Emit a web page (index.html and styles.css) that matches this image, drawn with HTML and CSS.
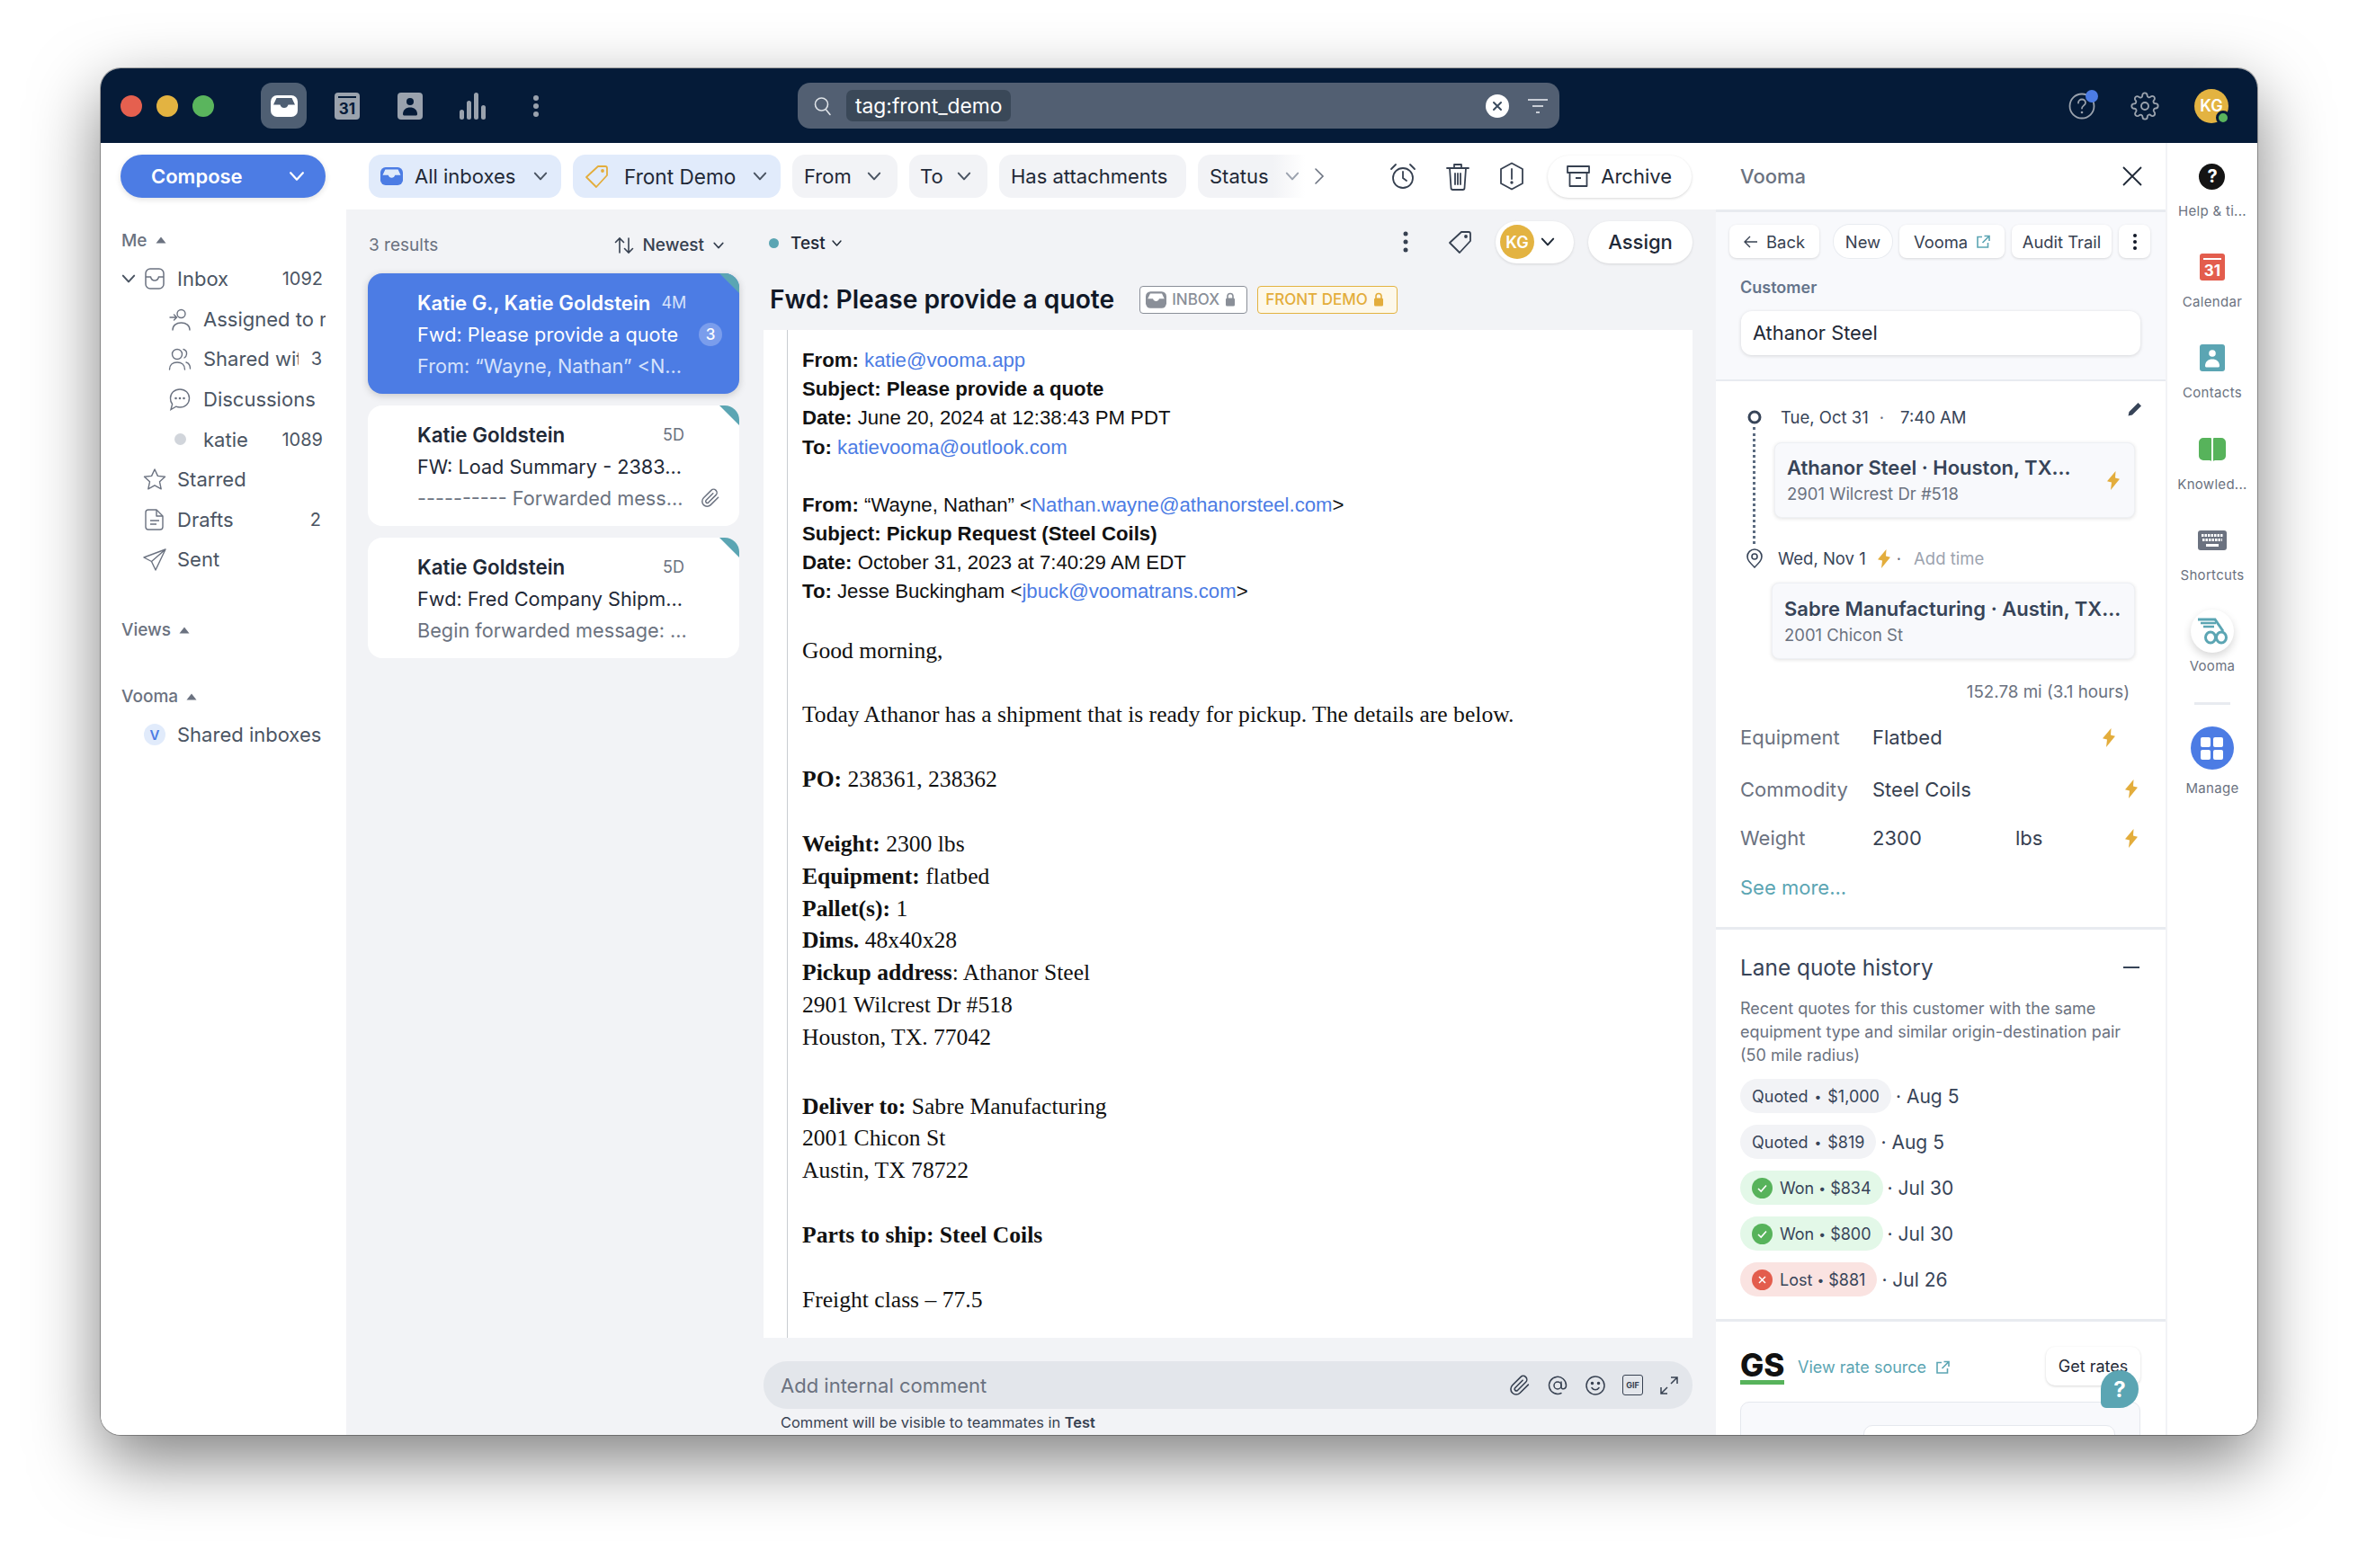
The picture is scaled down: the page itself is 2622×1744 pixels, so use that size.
FILE: index.html
```html
<!DOCTYPE html>
<html>
<head>
    <title>Front - tag:front_demo</title>
    <link rel="stylesheet" href="styles.css">
</head>
<body>
    <svg class="sprite">
        <symbol id="bolt" viewBox="0 0 16 21"><path d="M10.5 0 1 11.2l5 1.3L5 21l10-12.2-5-1.2z" fill="#e3ad3c"/></symbol>
        <symbol id="chev" viewBox="0 0 16 16"><path d="M2.5 5 8 11l5.5-6" fill="none" stroke="currentColor" stroke-width="1.8" stroke-linecap="round" stroke-linejoin="round"/></symbol>
        <symbol id="up" viewBox="0 0 12 8"><path d="M6 .5 11.5 7.500H.5z" fill="currentColor"/></symbol>
        <symbol id="tray" viewBox="0 0 30 24"><path d="M0 7a7 7 0 0 1 7-7h16a7 7 0 0 1 7 7v10a7 7 0 0 1-7 7H7a7 7 0 0 1-7-7z" fill="currentColor"/><path d="M6.5 3h17l3.500 7.500h-7.500c-.7 2.300-2.400 3.600-4.500 3.600s-3.800-1.300-4.500-3.600H3z" fill="var(--slot)"/></symbol>
        <symbol id="ext" viewBox="0 0 16 16"><path d="M7 2.500H2v11.500h11.500V9M9.500 1.500H15V7M15 1.500 7.500 9" fill="none" stroke="currentColor" stroke-width="1.6"/></symbol>
        <symbol id="clip" viewBox="0 0 24 24"><path d="m21.4 11.100-9.200 9.200a6 6 0 0 1-8.500-8.500l9.200-9.200a4 4 0 0 1 5.700 5.700l-9.200 9.200a2 2 0 0 1-2.800-2.800l8.500-8.500" fill="none" stroke="currentColor" stroke-width="1.6" stroke-linecap="round" stroke-linejoin="round"/></symbol>
    </svg>

    <div class="window">
        <header class="titlebar">
            <div class="lights">
                <span class="light red"></span>
                <span class="light yellow"></span>
                <span class="light green"></span>
            </div>
            <nav class="app-icons">
                <span class="app-icon active"><svg class="tray-w" width="30" height="24"><use href="#tray"/></svg></span>
                <span class="app-icon">
                    <svg width="28" height="30" viewBox="0 0 28 30"><rect width="28" height="30" rx="4" fill="#9aa2ad"/><rect x="4" y="4" width="20" height="2" fill="#051b38"/><text x="14" y="24" text-anchor="middle" class="icon-num" fill="#051b38">31</text></svg>
                </span>
                <span class="app-icon">
                    <svg width="28" height="30" viewBox="0 0 28 30"><rect width="28" height="30" rx="4" fill="#9aa2ad"/><circle cx="14" cy="10" r="4" fill="#051b38"/><path d="M6 24c0-5 3.500-7.500 8-7.500s8 2.500 8 7.500c0 1-1 1.500-2 1.500H8c-1 0-2-.5-2-1.500z" fill="#051b38"/></svg>
                </span>
                <span class="app-icon">
                    <svg width="30" height="30" viewBox="0 0 30 30"><g fill="#9aa2ad"><rect x="0" y="19" width="5" height="11" rx="2.500"/><rect x="8" y="9" width="5" height="21" rx="2.500"/><rect x="16" y="0" width="5" height="30" rx="2.500"/><rect x="24" y="14" width="5" height="16" rx="2.500"/></g></svg>
                </span>
                <span class="app-icon">
                    <svg width="8" height="26" viewBox="0 0 8 26"><g fill="#9aa2ad"><circle cx="4" cy="4" r="3"/><circle cx="4" cy="13" r="3"/><circle cx="4" cy="22" r="3"/></g></svg>
                </span>
            </nav>
            <div class="search">
                <svg class="search-glass" width="24" height="24" viewBox="0 0 24 24"><circle cx="10.500" cy="10" r="7" fill="none" stroke="#dfe3e8" stroke-width="1.600"/><path d="m15.500 16 4.500 5.500" stroke="#dfe3e8" stroke-width="1.600" stroke-linecap="round"/></svg>
                <span class="search-tag">tag:front_demo</span>
                <svg class="search-clear" width="26" height="26" viewBox="0 0 26 26"><circle cx="13" cy="13" r="13" fill="#fff"/><path d="m9 9 8 8m0-8-8 8" stroke="#3a4a5e" stroke-width="2" stroke-linecap="round"/></svg>
                <svg width="24" height="18" viewBox="0 0 24 18"><path d="M1 2h22M6 9h12M10 16h4" stroke="#c9ced6" stroke-width="2"/></svg>
            </div>
            <div class="title-right">
                <span class="help-dot">
                    <svg width="30" height="30" viewBox="0 0 30 30"><circle cx="15" cy="15" r="13.500" fill="none" stroke="#9aa2ad" stroke-width="1.800"/><path d="M11 11.500c0-2.500 2-4 4-4s4 1.500 4 3.800c0 3-4 3.200-4 6.200" fill="none" stroke="#9aa2ad" stroke-width="1.800" stroke-linecap="round"/><circle cx="15" cy="22" r="1.300" fill="#9aa2ad"/></svg>
                    <i></i>
                </span>
                <svg width="32" height="32" viewBox="0 0 24 24" fill="none" stroke="#9aa2ad" stroke-width="1.400" stroke-linejoin="round"><circle cx="12" cy="12" r="3"/><path d="M19.400 15a1.650 1.650 0 0 0 .33 1.820l.06.06a2 2 0 1 1-2.830 2.830l-.06-.06a1.650 1.650 0 0 0-2.800 1.170V21a2 2 0 1 1-4 0v-.09A1.650 1.650 0 0 0 7.300 19.700l-.06.06a2 2 0 1 1-2.830-2.830l.06-.06a1.650 1.650 0 0 0-1.170-2.800H3a2 2 0 1 1 0-4h.09A1.650 1.650 0 0 0 4.300 7.300l-.06-.06a2 2 0 1 1 2.830-2.830l.06.06a1.650 1.650 0 0 0 2.800-1.170V3a2 2 0 1 1 4 0v.09a1.650 1.650 0 0 0 2.800 1.170l.06-.06a2 2 0 1 1 2.830 2.830l-.06.06a1.650 1.650 0 0 0 1.170 2.800H21a2 2 0 1 1 0 4h-.09c-.66 0-1.250.39-1.510 1z"/></svg>
                <span class="avatar avatar-me">KG<i></i></span>
            </div>
        </header>

        <div class="app">
            <aside class="sidebar">
                <button class="compose"><span>Compose</span><svg width="20" height="20"><use href="#chev"/></svg></button>

                <div class="side-label me">Me <svg width="12" height="8"><use href="#up"/></svg></div>
                <div class="row row-inbox">
                    <svg class="row-chev" width="18" height="18"><use href="#chev"/></svg>
                    <span class="row-icon"><svg width="24" height="26" viewBox="0 0 24 26" fill="none" stroke="currentColor" stroke-width="1.500"><rect x="2" y="2" width="20" height="22" rx="5"/><path d="M2 11h5.500c.6 2.500 2.300 4 4.500 4s3.900-1.500 4.500-4H22"/></svg></span>
                    <span class="row-text">Inbox</span><span class="count">1092</span>
                </div>
                <div class="row row-sub">
                    <span class="row-icon"><svg width="24" height="26" viewBox="0 0 24 26" fill="none" stroke="currentColor" stroke-width="1.400" stroke-linecap="round"><circle cx="13.500" cy="7" r="4.500"/><path d="M4 25c0-5 4-8 9.500-8s9.500 3 9.500 8M1 11h7M5.500 8 8.500 11l-3 3"/></svg></span>
                    <span class="row-text clip-a">Assigned to me</span>
                </div>
                <div class="row row-sub">
                    <span class="row-icon"><svg width="26" height="26" viewBox="0 0 26 26" fill="none" stroke="currentColor" stroke-width="1.400" stroke-linecap="round"><circle cx="10" cy="8" r="5.500"/><path d="M17 2.500c2.600.8 3.800 3 3.500 5.500-.2 1.800-1.200 3.200-2.500 4M1.500 25c0-5 3.500-8 8.500-8s8.500 3 8.500 8M20 17c2.600.8 4.500 3.500 4.500 7"/></svg></span>
                    <span class="row-text clip-b">Shared with me</span><span class="count count-b">3</span>
                </div>
                <div class="row row-sub">
                    <span class="row-icon"><svg width="24" height="26" viewBox="0 0 24 26" fill="none" stroke="currentColor" stroke-width="1.400"><path d="M12 2c6 0 10.500 4.300 10.500 10S18 22 12 22c-1.500 0-3-.3-4.300-.8L2 24.500l1.600-6A10 10 0 0 1 1.500 12C1.500 6.300 6 2 12 2z"/><g fill="currentColor" stroke="none"><circle cx="7.500" cy="12" r="1.300"/><circle cx="12" cy="12" r="1.300"/><circle cx="16.500" cy="12" r="1.300"/></g></svg></span>
                    <span class="row-text">Discussions</span>
                </div>
                <div class="row row-sub">
                    <span class="row-icon"><i class="katie-dot"></i></span>
                    <span class="row-text">katie</span><span class="count">1089</span>
                </div>
                <div class="row">
                    <span class="row-icon"><svg width="26" height="26" viewBox="0 0 26 26" fill="none" stroke="currentColor" stroke-width="1.400" stroke-linejoin="round"><path d="m13 2 3.400 7.400 8.100.9-6 5.500 1.700 8L13 19.800l-7.200 4 1.700-8-6-5.500 8.100-.9z"/></svg></span>
                    <span class="row-text">Starred</span>
                </div>
                <div class="row">
                    <span class="row-icon"><svg width="22" height="26" viewBox="0 0 22 26" fill="none" stroke="currentColor" stroke-width="1.400" stroke-linejoin="round"><path d="M4 2h9l7 7v12a3 3 0 0 1-3 3H4a3 3 0 0 1-3-3V5a3 3 0 0 1 3-3z"/><path d="M13 2v7h7M6 14h10M6 18h7"/></svg></span>
                    <span class="row-text">Drafts</span><span class="count count-one">2</span>
                </div>
                <div class="row">
                    <span class="row-icon"><svg width="26" height="26" viewBox="0 0 26 26" fill="none" stroke="currentColor" stroke-width="1.400" stroke-linejoin="round"><path d="M25 2 1 11l8.500 4.500L14 25zM9.500 15.500 25 2"/></svg></span>
                    <span class="row-text">Sent</span>
                </div>

                <div class="side-label views">Views <svg width="12" height="8"><use href="#up"/></svg></div>
                <div class="side-label vooma">Vooma <svg width="12" height="8"><use href="#up"/></svg></div>
                <div class="row row-shared">
                    <span class="row-icon"><i class="v-badge">V</i></span>
                    <span class="row-text">Shared inboxes</span>
                </div>
            </aside>

            <main class="main">
                <div class="filters">
                    <span class="chip chip-blue chip-a"><svg class="chip-icon tray-b" width="25" height="20"><use href="#tray"/></svg>All inboxes<svg class="chip-chev" width="18" height="18"><use href="#chev"/></svg></span>
                    <span class="chip chip-blue chip-b"><svg class="chip-icon" width="28" height="28" viewBox="0 0 28 28" fill="none" stroke="#e3ad3c" stroke-width="1.800" stroke-linejoin="round"><path d="M15 3h8a2 2 0 0 1 2 2v8L13 26 2 15z"/><circle cx="20" cy="8" r="1" fill="#e3ad3c"/></svg>Front Demo<svg class="chip-chev" width="18" height="18"><use href="#chev"/></svg></span>
                    <span class="chip chip-c">From<svg class="chip-chev" width="18" height="18"><use href="#chev"/></svg></span>
                    <span class="chip chip-d">To<svg class="chip-chev" width="18" height="18"><use href="#chev"/></svg></span>
                    <span class="chip chip-e">Has attachments</span>
                    <span class="chip chip-f">Status<svg class="chip-chev" width="18" height="18"><use href="#chev"/></svg></span>
                    <svg class="more-filters" width="12" height="20" viewBox="0 0 12 20"><path d="m2 2 8 8-8 8" fill="none" stroke="#6b7280" stroke-width="1.600" stroke-linecap="round"/></svg>
                    <div class="filter-tools">
                        <svg width="32" height="32" viewBox="0 0 32 32" fill="none" stroke="#374151" stroke-width="1.800" stroke-linecap="round"><circle cx="16" cy="18" r="11"/><path d="M16 11v7l4 3M3 8l5-5M29 8l-5-5"/></svg>
                        <svg width="30" height="32" viewBox="0 0 30 32" fill="none" stroke="#374151" stroke-width="1.800" stroke-linecap="round" stroke-linejoin="round"><path d="M3 7h24M11 7V3h8v4M6 7l1.500 22a2 2 0 0 0 2 2h11a2 2 0 0 0 2-2L24 7M12 13v12M18 13v12M15 13v12"/></svg>
                        <svg width="30" height="32" viewBox="0 0 30 32" fill="none" stroke="#374151" stroke-width="1.800" stroke-linejoin="round"><path d="M15 1.500 27 8v16l-12 6.500L3 24V8z"/><path d="M15 8v11" stroke-linecap="round"/><circle cx="15" cy="23" r=".8" fill="#374151"/></svg>
                        <span class="archive"><svg width="28" height="28" viewBox="0 0 28 28" fill="none" stroke="#374151" stroke-width="1.800" stroke-linejoin="round"><path d="M2 3h24v7H2zM4.500 10v15h19V10M11 16h6"/></svg>Archive</span>
                    </div>
                </div>

                <div class="workspace">
                    <section class="list">
                        <div class="list-head">
                            <span class="results">3 results</span>
                            <span class="sort">
                                <svg width="22" height="20" viewBox="0 0 22 20" fill="none" stroke="currentColor" stroke-width="1.600" stroke-linecap="round"><path d="M6 18V2M1.500 6.500 6 2l4.500 4.500M16 2v16M11.500 13.500 16 18l4.500-4.500"/></svg>
                                Newest
                                <svg width="14" height="14"><use href="#chev"/></svg>
                            </span>
                        </div>
                        <article class="card selected">
                            <div class="card-line"><strong>Katie G., Katie Goldstein</strong><time>4M</time></div>
                            <div class="card-line card-subject"><span>Fwd: Please provide a quote</span><i class="card-count">3</i></div>
                            <div class="card-line card-preview"><span>From: “Wayne, Nathan” &lt;N...</span></div>
                        </article>
                        <article class="card">
                            <div class="card-line"><strong>Katie Goldstein</strong><time>5D</time></div>
                            <div class="card-line card-subject"><span>FW: Load Summary - 2383...</span></div>
                            <div class="card-line card-preview"><span>---------- Forwarded mess...</span><svg class="card-clip" width="22" height="22"><use href="#clip"/></svg></div>
                        </article>
                        <article class="card">
                            <div class="card-line"><strong>Katie Goldstein</strong><time>5D</time></div>
                            <div class="card-line card-subject"><span>Fwd: Fred Company Shipm...</span></div>
                            <div class="card-line card-preview"><span>Begin forwarded message: ...</span></div>
                        </article>
                    </section>

                    <section class="message">
                        <div class="message-tools">
                            <span class="test-dot"></span><span class="test-name">Test</span>
                            <svg class="test-chev" width="13" height="13"><use href="#chev"/></svg>
                            <div class="tools-right">
                                <svg width="8" height="24" viewBox="0 0 8 24"><g fill="#374151"><circle cx="4" cy="3" r="2.500"/><circle cx="4" cy="12" r="2.500"/><circle cx="4" cy="21" r="2.500"/></g></svg>
                                <svg class="tool-tag" width="28" height="28" viewBox="0 0 28 28" fill="none" stroke="#374151" stroke-width="1.800" stroke-linejoin="round"><path d="M15 3h8a2 2 0 0 1 2 2v8L13 26 2 15z"/><circle cx="20" cy="8" r="1" fill="#374151"/></svg>
                                <span class="assignee"><span class="avatar">KG</span><svg width="18" height="18"><use href="#chev"/></svg></span>
                                <span class="assign">Assign</span>
                            </div>
                        </div>
                        <div class="subject-row">
                            <h1>Fwd: Please provide a quote</h1>
                            <span class="tag-badge tag-inbox"><svg class="tray-g" width="23" height="19"><use href="#tray"/></svg>INBOX<svg class="lock" width="12" height="16" viewBox="0 0 12 16"><path d="M3 7V4.500a3 3 0 0 1 6 0V7" fill="none" stroke="currentColor" stroke-width="1.600"/><rect x="1" y="6.500" width="10" height="9" rx="1.500" fill="currentColor"/></svg></span>
                            <span class="tag-badge tag-demo">FRONT DEMO<svg class="lock" width="12" height="16" viewBox="0 0 12 16"><path d="M3 7V4.500a3 3 0 0 1 6 0V7" fill="none" stroke="currentColor" stroke-width="1.600"/><rect x="1" y="6.500" width="10" height="9" rx="1.500" fill="currentColor"/></svg></span>
                        </div>
                        <div class="mail">
                            <div class="mail-quote">
                                <div class="mail-head">
                                    <p><b>From:</b> <a>katie@vooma.app</a></p>
                                    <p><b>Subject: Please provide a quote</b></p>
                                    <p><b>Date:</b> June 20, 2024 at 12:38:43 PM PDT</p>
                                    <p><b>To:</b> <a>katievooma@outlook.com</a></p>
                                </div>
                                <div class="mail-head mail-head-2">
                                    <p><b>From:</b> “Wayne, Nathan” &lt;<a>Nathan.wayne@athanorsteel.com</a>&gt;</p>
                                    <p><b>Subject: Pickup Request (Steel Coils)</b></p>
                                    <p><b>Date:</b> October 31, 2023 at 7:40:29 AM EDT</p>
                                    <p><b>To:</b> Jesse Buckingham &lt;<a>jbuck@voomatrans.com</a>&gt;</p>
                                </div>
                                <div class="mail-body">
                                    <p class="first">Good morning,</p>
                                    <p>Today Athanor has a shipment that is ready for pickup. The details are below.</p>
                                    <p><b>PO:</b> 238361, 238362</p>
                                    <p><b>Weight:</b> 2300 lbs<br><b>Equipment:</b> flatbed<br><b>Pallet(s):</b> 1<br><b>Dims.</b> 48x40x28<br><b>Pickup address</b>: Athanor Steel<br>2901 Wilcrest Dr #518<br>Houston, TX. 77042</p>
                                    <p class="deliver"><b>Deliver to:</b> Sabre Manufacturing<br>2001 Chicon St<br>Austin, TX 78722</p>
                                    <p><b>Parts to ship: Steel Coils</b></p>
                                    <p>Freight class – 77.5</p>
                                </div>
                            </div>
                        </div>
                        <div class="comment">
                            <span class="comment-text">Add internal comment</span>
                            <div class="comment-icons">
                                <svg width="24" height="24"><use href="#clip"/></svg>
                                <svg width="24" height="24" viewBox="0 0 24 24" fill="none" stroke="currentColor" stroke-width="1.500" stroke-linecap="round"><circle cx="12" cy="12" r="4"/><path d="M16 8v5.500c0 3.500 5.500 3 5.500-1.500A9.500 9.500 0 1 0 16 20.500"/></svg>
                                <svg width="24" height="24" viewBox="0 0 24 24" fill="none" stroke="currentColor" stroke-width="1.500" stroke-linecap="round"><circle cx="12" cy="12" r="10"/><path d="M8 14.500c1 1.500 2.500 2.200 4 2.200s3-.7 4-2.200"/><circle cx="8.500" cy="9.500" r="1" fill="currentColor"/><circle cx="15.500" cy="9.500" r="1" fill="currentColor"/></svg>
                                <span class="gif">GIF</span>
                                <svg width="22" height="22" viewBox="0 0 22 22" fill="none" stroke="currentColor" stroke-width="1.500"><path d="M13 2h7v7M20 2l-7 7M9 20H2v-7M2 20l7-7"/></svg>
                            </div>
                        </div>
                        <p class="comment-note">Comment will be visible to teammates in <b>Test</b></p>
                    </section>
                </div>
            </main>

            <aside class="panel">
                <div class="panel-head">
                    <span>Vooma</span>
                    <svg width="22" height="22" viewBox="0 0 22 22"><path d="m1 1 20 20M21 1 1 21" stroke="#1f2937" stroke-width="1.800"/></svg>
                </div>
                <div class="panel-top">
                    <div class="btn-row">
                        <span class="pbtn pbtn-back"><svg width="16" height="14" viewBox="0 0 16 14" fill="none" stroke="currentColor" stroke-width="1.400"><path d="M15 7H1M7 1 1 7l6 6"/></svg>Back</span>
                        <span class="pbtn pbtn-new">New</span>
                        <span class="pbtn pbtn-vooma">Vooma<svg class="teal" width="16" height="16"><use href="#ext"/></svg></span>
                        <span class="pbtn pbtn-audit">Audit Trail</span>
                        <span class="pbtn pbtn-dots"><svg width="6" height="20" viewBox="0 0 6 20"><g fill="#111827"><circle cx="3" cy="3" r="2"/><circle cx="3" cy="10" r="2"/><circle cx="3" cy="17" r="2"/></g></svg></span>
                    </div>
                    <div class="customer-label">Customer</div>
                    <div class="customer-input">Athanor Steel</div>
                </div>

                <div class="panel-load">
                    <span class="route-line"></span>
                    <div class="stop-row">
                        <svg class="stop-mark" width="16" height="16" viewBox="0 0 16 16"><circle cx="8" cy="8" r="6" fill="none" stroke="#374458" stroke-width="3"/></svg>
                        <span>Tue, Oct 31</span><span class="stop-dot">·</span><span>7:40 AM</span>
                        <svg class="pencil" width="16" height="16" viewBox="0 0 16 16"><path d="M11.500 1 15 4.500 5 14.500 0.500 15.500 1.500 11z" fill="#374458"/></svg>
                    </div>
                    <div class="stop-card stop-card-a">
                        <div class="stop-body">
                            <strong>Athanor Steel · Houston, TX...</strong>
                            <span>2901 Wilcrest Dr #518</span>
                        </div>
                        <svg width="16" height="21"><use href="#bolt"/></svg>
                    </div>
                    <div class="stop-row stop-row-b">
                        <svg class="stop-pin" width="20" height="22" viewBox="0 0 20 22" fill="none" stroke="#374458" stroke-width="1.600"><path d="M10 21C5 16 2 13 2 9a8 8 0 0 1 16 0c0 4-3 7-8 12z"/><circle cx="10" cy="9" r="3"/></svg>
                        <span>Wed, Nov 1</span><svg class="stop-bolt" width="16" height="21"><use href="#bolt"/></svg><span class="stop-dot stop-dot-b">·</span><span class="add-time">Add time</span>
                    </div>
                    <div class="stop-card stop-card-b">
                        <div class="stop-body">
                            <strong>Sabre Manufacturing · Austin, TX...</strong>
                            <span>2001 Chicon St</span>
                        </div>
                    </div>
                    <div class="distance">152.78 mi (3.1 hours)</div>
                    <div class="field"><label>Equipment</label><span class="field-val">Flatbed</span><svg class="field-bolt bolt-in" width="16" height="21"><use href="#bolt"/></svg></div>
                    <div class="field field-commodity"><label>Commodity</label><span class="field-val">Steel Coils</span><svg class="field-bolt" width="16" height="21"><use href="#bolt"/></svg></div>
                    <div class="field"><label>Weight</label><span class="field-val">2300</span><span class="field-unit">lbs</span><svg class="field-bolt" width="16" height="21"><use href="#bolt"/></svg></div>
                    <div class="see-more">See more...</div>
                </div>

                <div class="panel-lane">
                    <div class="lane-head"><span>Lane quote history</span><i class="lane-minus"></i></div>
                    <p class="lane-desc">Recent quotes for this customer with the same equipment type and similar origin-destination pair (50 mile radius)</p>
                    <div class="quotes">
                        <div class="quote"><span class="pill">Quoted<em>•</em>$1,000</span><span class="quote-date">· Aug 5</span></div>
                        <div class="quote"><span class="pill">Quoted<em>•</em>$819</span><span class="quote-date">· Aug 5</span></div>
                        <div class="quote"><span class="pill pill-won"><svg width="23" height="23" viewBox="0 0 23 23"><circle cx="11.500" cy="11.500" r="11.500" fill="#57b35b"/><path d="m7 12 3.200 3L16 8.500" fill="none" stroke="#fff" stroke-width="1.600"/></svg>Won<em>•</em>$834</span><span class="quote-date">· Jul 30</span></div>
                        <div class="quote"><span class="pill pill-won"><svg width="23" height="23" viewBox="0 0 23 23"><circle cx="11.500" cy="11.500" r="11.500" fill="#57b35b"/><path d="m7 12 3.200 3L16 8.500" fill="none" stroke="#fff" stroke-width="1.600"/></svg>Won<em>•</em>$800</span><span class="quote-date">· Jul 30</span></div>
                        <div class="quote"><span class="pill pill-lost"><svg width="23" height="23" viewBox="0 0 23 23"><circle cx="11.500" cy="11.500" r="11.500" fill="#e35d4d"/><path d="m8 8 7 7m0-7-7 7" fill="none" stroke="#fff" stroke-width="1.500"/></svg>Lost<em>•</em>$881</span><span class="quote-date">· Jul 26</span></div>
                    </div>
                </div>

                <div class="panel-rates">
                    <div class="rates-row">
                        <span class="gs">GS</span>
                        <span class="rate-link">View rate source<svg width="16" height="16"><use href="#ext"/></svg></span>
                        <span class="get-rates">Get rates</span>
                    </div>
                    <div class="rate-card"><div class="rate-inner"></div></div>
                </div>

                <span class="help-bubble">?</span>
            </aside>

            <aside class="rail">
                <div class="rail-item">
                    <span class="rail-icon"><span class="rail-help">?</span></span>
                    <span class="rail-label">Help &amp; ti...</span>
                </div>
                <div class="rail-item">
                    <span class="rail-icon"><svg width="28" height="30" viewBox="0 0 28 30"><rect width="28" height="30" rx="3" fill="#e35d4d"/><rect x="4" y="5" width="20" height="2" fill="#fff"/><text x="14" y="25" text-anchor="middle" class="icon-num" fill="#fff">31</text></svg></span>
                    <span class="rail-label">Calendar</span>
                </div>
                <div class="rail-item">
                    <span class="rail-icon"><svg width="28" height="30" viewBox="0 0 28 30"><rect width="28" height="30" rx="3" fill="#5ba5b3"/><circle cx="14" cy="10" r="3.800" fill="#fff"/><path d="M6 24c0-5 3.500-7.500 8-7.500s8 2.500 8 7.500c0 1-1 1.500-2 1.500H8c-1 0-2-.5-2-1.500z" fill="#fff"/></svg></span>
                    <span class="rail-label">Contacts</span>
                </div>
                <div class="rail-item">
                    <span class="rail-icon"><svg width="30" height="28" viewBox="0 0 30 28"><path d="M0 6a5 5 0 0 1 5-5h8c1 0 1 1 1 1v25s-1-1-2-1H5a5 5 0 0 1-5-5zM30 6a5 5 0 0 0-5-5h-8c-1 0-1 1-1 1v25s1-1 2-1h7a5 5 0 0 0 5-5z" fill="#57b35b"/></svg></span>
                    <span class="rail-label">Knowled...</span>
                </div>
                <div class="rail-item">
                    <span class="rail-icon"><svg width="32" height="22" viewBox="0 0 32 22"><rect width="32" height="22" rx="3" fill="#6b7280"/><path d="M4 5.500h24M5 10.500h22" stroke="#fff" stroke-width="3" stroke-dasharray="2.500 1"/><rect x="9" y="15" width="14" height="3" fill="#fff"/></svg></span>
                    <span class="rail-label">Shortcuts</span>
                </div>
                <div class="rail-item">
                    <span class="rail-icon"><span class="rail-circle rail-vooma"><svg width="34" height="30" viewBox="0 0 34 30" fill="none" stroke="#5ba5b3" stroke-width="3"><path d="M1 2h19l9 13" /><path d="M4 6h17M7 10h12" stroke-width="2.500"/><ellipse cx="15" cy="22" rx="5.500" ry="6"/><ellipse cx="27" cy="22" rx="5.500" ry="6"/></svg></span></span>
                    <span class="rail-label">Vooma</span>
                </div>
                <span class="rail-rule"></span>
                <div class="rail-item rail-manage">
                    <span class="rail-icon"><span class="rail-circle rail-grid"><i></i><i></i><i></i><i></i></span></span>
                    <span class="rail-label">Manage</span>
                </div>
            </aside>
        </div>
    </div>
</body>
</html>
```

FILE: styles.css
```css
* {
    box-sizing: border-box;
}
html, body {
    height: 100%;
}
body {
    margin: 0;
    padding: 76px 0 0 112px;
    background: #fff;
    overflow: hidden;
    font-family: "Inter", "Liberation Sans", sans-serif;
    color: #1f2937;
}
.sprite {
    display: none;
}
p, h1 {
    margin: 0;
}
svg {
    flex: none;
    display: block;
}
em, i {
    font-style: normal;
}

/* window */
.window {
    position: relative;
    width: 2398px;
    height: 1520px;
    border-radius: 22px;
    overflow: hidden;
}
body::before {
    content: "";
    position: absolute;
    left: 112px;
    top: 76px;
    width: 2398px;
    height: 1520px;
    border-radius: 22px;
    box-shadow: 0 0 0 1px rgba(0,0,0,0.3), 0 28px 76px rgba(0,0,0,0.5);
}
.titlebar {
    display: flex;
    align-items: center;
    height: 83px;
    background: #051b38;
}
.lights {
    display: flex;
    gap: 16px;
    padding-left: 22px;
}
.light {
    width: 24px;
    height: 24px;
    border-radius: 50%;
}
.red { background: #e5604f; }
.yellow { background: #e3b341; }
.green { background: #5ab55d; }
.app-icons {
    display: flex;
    align-items: center;
    margin-left: 52px;
    gap: 19px;
}
.app-icon {
    display: flex;
    align-items: center;
    justify-content: center;
    width: 51px;
    height: 51px;
    border-radius: 12px;
}
.app-icon.active {
    background: #4f5f73;
}
.tray-w {
    color: #fff;
    --slot: #4f5f73;
}
.tray-b {
    color: #4c7ce4;
    --slot: #e1ebfb;
}
.tray-g {
    color: #8a8f98;
    --slot: #fff;
}
.icon-num {
    font: 700 17px "Inter", sans-serif;
}
.search {
    display: flex;
    align-items: center;
    width: 847px;
    height: 51px;
    margin-left: 266px;
    padding: 0 12px 0 16px;
    background: #525f72;
    border-radius: 14px;
}
.search-tag {
    margin-left: 14px;
    padding: 0 10px;
    height: 35px;
    line-height: 35px;
    border-radius: 7px;
    background: #3a4858;
    color: #fff;
    font-size: 22.8px;
}
.search-clear {
    margin-left: auto;
    margin-right: 20px;
}
.title-right {
    display: flex;
    align-items: center;
    gap: 39px;
    margin-left: auto;
    padding-right: 32px;
}
.help-dot {
    position: relative;
}
.help-dot i {
    position: absolute;
    right: -3px;
    top: -3px;
    width: 14px;
    height: 14px;
    border-radius: 50%;
    background: #4c7ce4;
}
.avatar {
    display: flex;
    align-items: center;
    justify-content: center;
    width: 38px;
    height: 38px;
    border-radius: 50%;
    background: #e3b341;
    color: #fff;
    font-size: 18px;
    font-weight: 600;
}
.avatar-me {
    position: relative;
}
.avatar-me i {
    position: absolute;
    right: -2px;
    bottom: -2px;
    width: 16px;
    height: 16px;
    border-radius: 50%;
    background: #5ab55d;
    border: 3px solid #051b38;
}

.app {
    display: flex;
    height: 1437px;
}

/* left sidebar */
.sidebar {
    width: 273px;
    flex: none;
    padding-top: 13px;
    background: #fff;
    color: #4b5563;
    font-size: 22px;
}
.compose {
    display: flex;
    align-items: center;
    justify-content: space-between;
    width: 228px;
    height: 48px;
    margin-left: 22px;
    padding: 0 22px 0 34px;
    border: none;
    border-radius: 24px;
    background: #4c7ce4;
    color: #fff;
    font: 600 22px "Inter", sans-serif;
    box-shadow: 0 2px 6px rgba(0,0,0,0.12);
}
.side-label {
    display: flex;
    align-items: center;
    gap: 9px;
    height: 20px;
    padding-left: 23px;
    font-size: 19px;
    font-weight: 500;
    color: #6b7280;
}
.side-label.me {
    margin: 37px 0 11px;
}
.side-label.views {
    margin-top: 46px;
}
.side-label.vooma {
    margin: 54px 0 10px;
}
.row {
    display: flex;
    align-items: center;
    height: 44.6px;
    padding-left: 46px;
}
.row-inbox {
    padding-left: 22px;
}
.row-chev {
    width: 18px;
    margin-right: 6px;
    color: #4b5563;
}
.row-sub {
    padding-left: 74px;
}
.row-icon {
    display: flex;
    align-items: center;
    justify-content: center;
    width: 28px;
    flex: none;
    margin-right: 11px;
    color: #6b7280;
}
.row-sub .row-icon {
    margin-right: 12px;
}
.row-text {
    white-space: nowrap;
    overflow: hidden;
}
.clip-a {
    width: 136px;
}
.clip-b {
    width: 106px;
}
.count {
    margin-left: auto;
    padding-right: 26px;
    font-size: 20px;
}
.count-b {
    padding-right: 27px;
}
.count-one {
    padding-right: 28px;
}
.katie-dot {
    width: 13px;
    height: 13px;
    border-radius: 50%;
    background: #d1d5db;
}
.v-badge {
    display: flex;
    align-items: center;
    justify-content: center;
    width: 24px;
    height: 24px;
    border-radius: 50%;
    background: #e1ebfb;
    color: #4c7ce4;
    font-size: 15px;
    font-weight: 600;
}

/* main column */
.main {
    display: flex;
    flex-direction: column;
    width: 1523px;
    flex: none;
    background: #f2f3f6;
}
.filters {
    display: flex;
    align-items: center;
    gap: 13px;
    height: 74px;
    padding: 0 27px 0 25px;
    background: #fff;
    font-size: 22px;
}
.chip {
    display: flex;
    align-items: center;
    height: 48px;
    padding: 0 14px;
    border-radius: 14px;
    background: #f2f3f6;
    white-space: nowrap;
}
.chip-icon {
    margin-right: 13px;
}
.chip-blue {
    background: #e1ebfb;
}
.chip-chev {
    margin-left: auto;
    color: #4b5563;
}
.chip-a { width: 214px; padding-left: 13px; }
.chip-b { width: 231px; padding-left: 13px; font-size: 22.6px; }
.chip-b .chip-icon { margin-right: 16px; }
.chip-c { width: 117px; padding: 0 17px 0 13px; }
.chip-d { width: 87px; padding: 0 17px 0 12px; }
.chip-e { width: 208px; padding-left: 13px; }
.chip-f {
    width: 119px;
    padding: 0 5px 0 13px;
    border-radius: 14px 0 0 14px;
    background: linear-gradient(90deg, #f2f3f6 70%, #fff);
    color: #1f2937;
}
.chip-f .chip-chev {
    color: #9ca3af;
}
.more-filters {
    margin-left: -3px;
}
.filter-tools {
    display: flex;
    align-items: center;
    gap: 30px;
    margin-left: auto;
}
.archive {
    display: flex;
    align-items: center;
    gap: 11px;
    height: 47px;
    margin-left: -5px;
    padding: 0 22px 0 20px;
    border-radius: 24px;
    background: #fff;
    box-shadow: 0 1px 3px rgba(0,0,0,0.16);
}
.workspace {
    display: flex;
    flex: 1;
    min-height: 0;
}

/* conversation list */
.list {
    width: 464px;
    flex: none;
    padding: 0 27px 0 24px;
}
.list-head {
    display: flex;
    align-items: center;
    justify-content: space-between;
    height: 71px;
    padding: 8px 16px 0 1px;
}
.results {
    font-size: 19px;
    color: #6b7280;
}
.sort {
    display: flex;
    align-items: center;
    gap: 9px;
    font-size: 19px;
    font-weight: 500;
    color: #374151;
}
.card {
    position: relative;
    height: 134px;
    margin-bottom: 13px;
    padding: 15px 0 0 55px;
    border-radius: 16px;
    background: #fff;
    overflow: hidden;
    font-size: 21.7px;
}
.card::after {
    content: "";
    position: absolute;
    top: 0;
    right: 0;
    border-style: solid;
    border-width: 0 22px 22px 0;
    border-color: transparent #5ba5b3 transparent transparent;
}
.list .selected {
    background: #4c7ce4;
    color: #fff;
    box-shadow: 0 2px 8px rgba(0,0,0,0.18);
    overflow: visible;
}
.selected::after {
    border-top-right-radius: 16px;
}
.card-line {
    display: flex;
    align-items: center;
    height: 35px;
    white-space: nowrap;
}
.card-line strong {
    font-size: 22.4px;
    font-weight: 600;
    color: #1f2937;
}
.selected .card-line strong {
    font-size: 22.2px;
    color: #fff;
}
.card-line time {
    margin-left: 12px;
    font-size: 18px;
    color: #6b7280;
}
.card:not(.selected) time {
    margin-left: auto;
    margin-right: 61px;
}
.selected .card-line time {
    color: #d6e2fb;
}
.card-preview {
    color: #6b7280;
}
.selected .card-preview {
    color: #d6e2fb;
}
.card-count {
    display: flex;
    align-items: center;
    justify-content: center;
    width: 26px;
    height: 26px;
    margin-left: auto;
    margin-right: 19px;
    border-radius: 50%;
    background: #7a9dec;
    color: #fff;
    font-size: 17px;
    font-weight: 500;
}
.card-clip {
    margin-left: auto;
    margin-right: 21px;
    color: #6b7280;
}

/* open message */
.message {
    display: flex;
    flex-direction: column;
    width: 1059px;
    flex: none;
    padding-right: 26px;
}
.message-tools {
    display: flex;
    align-items: center;
    height: 72px;
    padding-left: 6px;
    font-size: 19px;
}
.test-dot,
.test-name,
.test-chev {
    margin-top: 3px;
}
.test-dot {
    width: 11px;
    height: 11px;
    border-radius: 50%;
    background: #5ba5b3;
}
.test-name {
    margin-left: 13px;
    font-weight: 500;
}
.test-chev {
    margin-left: 6px;
}
.tools-right {
    display: flex;
    align-items: center;
    margin-left: auto;
}
.tool-tag {
    margin-left: 43px;
    margin-right: 25px;
}
.assignee {
    display: flex;
    align-items: center;
    gap: 6px;
    width: 87px;
    height: 47px;
    padding-left: 5px;
    border-radius: 24px;
    background: #fff;
    box-shadow: 0 1px 3px rgba(0,0,0,0.12);
}
.assign {
    display: flex;
    align-items: center;
    justify-content: center;
    width: 116px;
    height: 47px;
    margin-left: 16px;
    border-radius: 24px;
    background: #fff;
    font-size: 22px;
    font-weight: 500;
    box-shadow: 0 1px 3px rgba(0,0,0,0.12);
}
.subject-row {
    display: flex;
    align-items: center;
    height: 62px;
    padding: 0 0 6px 7px;
}
h1 {
    font-size: 28.2px;
    font-weight: 600;
    color: #111827;
    white-space: nowrap;
}
.tag-badge {
    display: flex;
    align-items: center;
    height: 31px;
    padding: 0 8px;
    border-radius: 4px;
    font-size: 17px;
    font-weight: 500;
    white-space: nowrap;
}
.tag-inbox {
    gap: 6px;
    margin-left: 28px;
    width: 120px;
    padding: 0 6px;
    border: 1px solid #8a8f98;
    color: #8a8f98;
    background: #fff;
}
.tag-demo {
    gap: 6px;
    margin-left: 11px;
    width: 156px;
    border: 1px solid #e3b341;
    color: #e3ad3c;
    background: #fdf8ea;
}
.mail {
    height: 1121px;
    flex: none;
    padding-left: 26px;
    background: #fff;
    overflow: hidden;
}
.mail-quote {
    height: 100%;
    padding: 18px 0 0 16px;
    border-left: 1px solid #c9ccd1;
}
.mail-head {
    font-family: "Liberation Sans", Arial, sans-serif;
    font-size: 22.2px;
    line-height: 32.2px;
    color: #111;
}
.mail-head a {
    color: #4c7ce4;
}
.mail-head-2 {
    margin-top: 32px;
}
.mail-body {
    font-family: "Liberation Serif", serif;
    font-size: 25.6px;
    line-height: 35.8px;
    color: #111;
}
.mail-body p {
    margin-top: 36px;
}
.mail-body .first {
    margin-top: 31px;
}
.mail-body .deliver {
    margin-top: 41px;
}
.comment {
    display: flex;
    align-items: center;
    flex: none;
    height: 53px;
    margin-top: 26px;
    padding: 0 15px 0 19px;
    border-radius: 26px;
    background: #e3e6eb;
    font-size: 22px;
    color: #6b7280;
}
.comment-icons {
    display: flex;
    align-items: center;
    gap: 18px;
    margin-left: auto;
    color: #374151;
}
.gif {
    width: 23px;
    height: 23px;
    line-height: 21px;
    border: 1.5px solid #374151;
    border-radius: 3px;
    text-align: center;
    font-size: 9px;
    font-weight: 700;
}
.comment-note {
    margin-top: 5px;
    padding-left: 19px;
    font-size: 16.4px;
    line-height: 20px;
    color: #374151;
}
.comment-note b {
    font-weight: 600;
}

/* right panel */
.panel {
    position: relative;
    display: flex;
    flex-direction: column;
    width: 502px;
    flex: none;
    border-right: 2px solid #f2f3f6;
    background: #fff;
    overflow: hidden;
}
.panel-head {
    display: flex;
    align-items: center;
    justify-content: space-between;
    flex: none;
    height: 77px;
    padding: 0 26px 1px 27px;
    border-bottom: 3px solid #e8ebf0;
    font-size: 22px;
    font-weight: 500;
    color: #6b7280;
}
.panel-top {
    flex: none;
    height: 188px;
    padding: 14px 0 0 15px;
    background: #f8f9fc;
    border-bottom: 2px solid #e8ebf0;
}
.btn-row {
    display: flex;
    gap: 8px;
}
.pbtn {
    display: flex;
    align-items: center;
    justify-content: center;
    gap: 9px;
    height: 37px;
    border-radius: 8px;
    background: #fff;
    font-size: 18.4px;
    color: #374151;
    box-shadow: 0 1px 3px rgba(0,0,0,0.14);
}
.pbtn-back { width: 100px; margin-right: 8px; }
.pbtn-new { width: 65px; border-radius: 18px; box-shadow: 0 0 0 1px #e8ebf0; }
.pbtn-vooma { width: 117px; }
.pbtn-audit { width: 111px; }
.pbtn-dots { width: 35px; }
.teal {
    color: #5ba5b3;
}
.customer-label {
    margin: 22px 0 0 12px;
    font-size: 18px;
    line-height: 22px;
    font-weight: 600;
    color: #64748b;
}
.customer-input {
    width: 444px;
    height: 49px;
    margin: 15px 0 0 13px;
    padding-left: 13px;
    line-height: 49px;
    border-radius: 12px;
    background: #fff;
    font-size: 21.8px;
    box-shadow: 0 1px 4px rgba(0,0,0,0.14);
}
.panel-load {
    position: relative;
    flex: none;
    padding: 28px 0 32px 27px;
    border-bottom: 3px solid #e8ebf0;
    font-size: 18.5px;
}
.route-line {
    position: absolute;
    left: 41px;
    top: 51px;
    height: 130px;
    border-left: 3px dotted #5b6b80;
}
.stop-row {
    display: flex;
    align-items: center;
    height: 24px;
    padding-left: 45px;
    color: #374458;
}
.stop-mark {
    margin-left: -37px;
    margin-right: 21px;
}
.stop-dot {
    margin: 0 18px 0 12px;
    color: #6b7280;
}
.pencil {
    margin-left: auto;
    margin-right: 26px;
    margin-top: -18px;
}
.stop-row-b {
    margin-top: 33px;
    padding-left: 42px;
}
.stop-pin {
    margin-left: -36px;
    margin-right: 16px;
}
.stop-bolt {
    margin-left: 12px;
}
.stop-dot-b {
    margin: 0 14px 0 6px;
}
.add-time {
    color: #9ca3af;
}
.stop-card {
    display: flex;
    align-items: center;
    justify-content: space-between;
    width: 401px;
    height: 84px;
    margin: 16px 0 0 38px;
    padding: 0 15px 0 13px;
    border-radius: 8px;
    border: 1px solid #eef0f4;
    background: #f8f9fc;
    box-shadow: 0 1px 4px rgba(0,0,0,0.12);
}
.stop-card-b {
    width: 404px;
    height: 85px;
    margin: 15px 0 0 35px;
}
.stop-body strong {
    display: block;
    font-size: 22px;
    line-height: 30px;
    font-weight: 600;
    color: #374458;
    white-space: nowrap;
}
.stop-body span {
    display: block;
    font-size: 18.5px;
    line-height: 28px;
    color: #6b7280;
}
.distance {
    height: 24px;
    margin-top: 25px;
    padding-right: 40px;
    font-size: 18.8px;
    line-height: 24px;
    text-align: right;
    color: #6b7280;
}
.field {
    display: flex;
    align-items: center;
    height: 56px;
    font-size: 22px;
    color: #374151;
}
.distance + .field {
    margin-top: 10px;
}
.field-commodity {
    padding-top: 3px;
}
.field label {
    width: 147px;
    color: #6b7280;
}
.field-val {
    width: 159px;
}
.field-bolt {
    margin-left: auto;
    margin-right: 30px;
}
.field-bolt.bolt-in {
    margin-right: 55px;
}
.see-more {
    margin-top: 15px;
    font-size: 22px;
    line-height: 24px;
    color: #5ba5b3;
}
.panel-lane {
    flex: none;
    padding: 27px 0 25px 27px;
    border-bottom: 3px solid #e8ebf0;
}
.lane-head {
    display: flex;
    align-items: center;
    justify-content: space-between;
    padding-right: 29px;
    height: 30px;
    font-size: 24.4px;
    color: #374458;
}
.lane-minus {
    width: 18px;
    height: 2px;
    background: #374458;
}
.lane-desc {
    width: 430px;
    margin-top: 18px;
    font-size: 18px;
    line-height: 26px;
    color: #6b7280;
}
.quotes {
    display: flex;
    flex-direction: column;
    gap: 13px;
    margin-top: 13px;
}
.quote {
    display: flex;
    align-items: center;
    gap: 5px;
}
.pill {
    display: flex;
    align-items: center;
    height: 38px;
    padding: 0 13px;
    border-radius: 19px;
    background: #f2f3f6;
    font-size: 18px;
    color: #374458;
}
.pill svg {
    margin-right: 8px;
}
.pill em {
    margin: 0 7px;
    font-size: 14px;
}
.pill-won { background: #e3f8e8; }
.pill-lost { background: #fae3e1; }
.pill-won em,
.pill-lost em {
    margin: 0 5px;
}
.quote-date {
    font-size: 21px;
    color: #374458;
}
.panel-rates {
    flex: none;
    padding: 28px 28px 0 27px;
}
.rates-row {
    display: flex;
    align-items: center;
    height: 43px;
}
.gs {
    width: 49px;
    margin-top: 4px;
    padding-bottom: 3px;
    border-bottom: 5px solid #57b35b;
    font-size: 35px;
    line-height: 28px;
    font-weight: 800;
    color: #111;
}
.rate-link {
    display: flex;
    align-items: center;
    gap: 10px;
    margin: 2px 0 0 15px;
    font-size: 18px;
    color: #5ba5b3;
}
.get-rates {
    display: flex;
    align-items: center;
    justify-content: center;
    width: 105px;
    height: 43px;
    margin-left: auto;
    border-radius: 10px;
    background: #fff;
    font-size: 18px;
    box-shadow: 0 1px 3px rgba(0,0,0,0.16);
}
.rate-card {
    height: 100px;
    margin-top: 18px;
    padding: 25px 27px 0 136px;
    border: 1px solid #e5e8ee;
    border-radius: 10px;
    background: #f8f9fc;
}
.rate-inner {
    height: 80px;
    border: 1px solid #e5e8ee;
    border-radius: 10px;
    background: #fff;
}
.help-bubble {
    position: absolute;
    left: 428px;
    top: 1365px;
    display: flex;
    align-items: center;
    justify-content: center;
    width: 42px;
    height: 42px;
    border-radius: 50% 50% 50% 6px;
    background: #5ba5b3;
    color: #fff;
    font-size: 24px;
    font-weight: 700;
}

/* app rail */
.rail {
    display: flex;
    flex-direction: column;
    align-items: center;
    width: 100px;
    flex: none;
    background: #fff;
}
.rail-item {
    display: flex;
    flex-direction: column;
    align-items: center;
    height: 101.2px;
    padding-top: 21px;
}
.rail-icon {
    display: flex;
    align-items: center;
    justify-content: center;
    height: 32px;
}
.rail-label {
    margin-top: 13px;
    font-size: 15px;
    line-height: 20px;
    letter-spacing: 0.3px;
    color: #6b7280;
    white-space: nowrap;
}
.rail-help {
    display: flex;
    align-items: center;
    justify-content: center;
    width: 29px;
    height: 29px;
    border-radius: 50%;
    background: #141414;
    color: #fff;
    font-size: 20px;
    font-weight: 700;
}
.rail-circle {
    display: flex;
    align-items: center;
    justify-content: center;
    width: 48px;
    height: 48px;
    border-radius: 50%;
}
.rail-vooma {
    background: #fff;
    box-shadow: 0 4px 10px rgba(0,0,0,0.16);
}
.rail-rule {
    width: 40px;
    height: 3px;
    margin: 15px 0 11px;
    background: #e8ebf0;
}
.rail-grid {
    display: grid;
    grid-template-columns: 11px 11px;
    gap: 3px;
    justify-content: center;
    align-content: center;
    background: #4c7ce4;
}
.rail-grid i {
    height: 11px;
    border-radius: 2px;
    background: #fff;
}
.rail-manage .rail-label {
    margin-top: 19px;
}
```
